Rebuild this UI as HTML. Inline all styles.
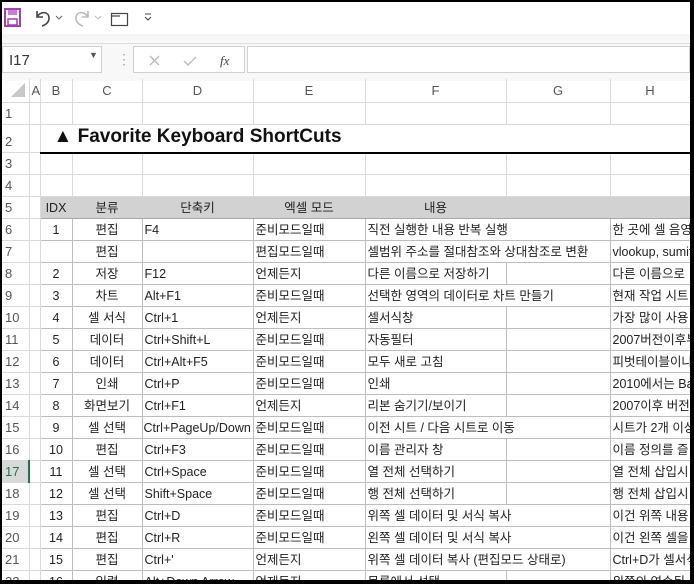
<!DOCTYPE html>
<html><head><meta charset="utf-8">
<style>
*{margin:0;padding:0;box-sizing:border-box}
body{width:694px;height:584px;overflow:hidden;background:#000;position:relative;font-family:"Liberation Sans","Noto Sans CJK KR",sans-serif;}
#win{position:absolute;left:2px;top:2px;width:688px;height:578px;background:#fff;overflow:hidden}
#tb{position:absolute;left:0;top:0;width:688px;height:32px;background:#fff}
#sep{position:absolute;left:0;top:32px;width:688px;height:10px;background:linear-gradient(#f4f4f4,#fafafa)}
#fb{position:absolute;left:0;top:41px;width:688px;height:38px;background:#f8f8f8;border-top:1px solid #ddd}
.box{position:absolute;background:#fff;border:1px solid #d0d0d0}
table{position:absolute;left:0;top:77px;border-collapse:collapse;table-layout:fixed;width:688px;font-size:12.5px;color:#222}
td{height:22px;border:1px solid #dadada;white-space:nowrap;overflow:hidden;padding:0 2px;line-height:20px}
td.rh{color:#555;font-size:13px;text-align:left;padding-left:3px;border-left:none}
tr.ch td{color:#555;font-size:13px;text-align:center;height:22px;line-height:18px;border-top:none}
td.c{text-align:center}
.t td.d{border-color:#bdbdbd}
.hd td.d{background:#d2d2d2;border-color:#d2d2d2;border-bottom-color:#a8a8a8;border-top-color:#a8a8a8;text-align:center}
td.bl{border-left:1px solid #888 !important}
</style></head><body>
<div id="win">
<div id="tb">
<svg width="200" height="32" style="position:absolute;left:0;top:0">
<rect x="3" y="7" width="15" height="17" fill="none" stroke="#a33fb0" stroke-width="2"/>
<rect x="6" y="8" width="9" height="5" fill="#c77ed0"/>
<rect x="6" y="17" width="9" height="6" fill="#fff" stroke="#a33fb0" stroke-width="1.5"/>
<path d="M35 9 L35 15 L41 15 M35 15 C38 9 47 9 47 16 C47 21 43 23 40 24" fill="none" stroke="#444" stroke-width="1.6"/>
<path d="M54 14 l3 3 l3 -3" fill="none" stroke="#666" stroke-width="1"/>
<path d="M86 9 L86 15 L80 15 M86 15 C83 9 74 9 74 16 C74 21 78 23 81 24" fill="none" stroke="#bbb" stroke-width="1.6"/>
<path d="M93 14 l3 3 l3 -3" fill="none" stroke="#bbb" stroke-width="1"/>
<rect x="109.5" y="11.5" width="16" height="12" fill="none" stroke="#444" stroke-width="1.2"/>
<line x1="110" y1="14" x2="118" y2="14" stroke="#444" stroke-width="1.2"/>
<path d="M143 12 h6 M143 15 l3 3 l3 -3" fill="none" stroke="#444" stroke-width="1.1"/>
</svg>
</div>
<div id="sep"></div>
<div id="fb">
<div class="box" style="left:0;top:2px;width:100px;height:27px;font-size:15px;color:#333;padding:5px 0 0 6px">I17<span style="position:absolute;left:86px;top:3px;font-size:9px;color:#555">▼</span></div>
<div style="position:absolute;left:115px;top:7px;color:#aaa;font-size:14px">⋮</div>
<div class="box" style="left:131px;top:2px;width:112px;height:27px">
<svg width="112" height="27"><path d="M16 9 l9 9 M25 9 l-9 9" stroke="#bbb" stroke-width="1.4"/><path d="M50 14 l4 4 l8 -8" fill="none" stroke="#bbb" stroke-width="1.4"/>
<text x="86" y="18" font-family="Liberation Serif" font-style="italic" font-size="13" fill="#444">fx</text></svg></div>
<div class="box" style="left:245px;top:2px;width:443px;height:27px"></div>
</div>
<table>
<colgroup><col style="width:27px"><col style="width:11px"><col style="width:32px"><col style="width:70px"><col style="width:111px"><col style="width:112px"><col style="width:141px"><col style="width:104px"><col style="width:80px"></colgroup>
<tr class="ch"><td style="border-left:none"><svg width="20" height="18"><path d="M20 4 L20 18 L6 18Z" fill="#c8c8c8"/></svg></td><td>A</td><td>B</td><td>C</td><td>D</td><td>E</td><td>F</td><td>G</td><td>H</td></tr>
<tr><td class="rh">1</td><td></td><td></td><td></td><td></td><td></td><td></td><td></td><td></td></tr>
<tr><td class="rh" style="height:28px;padding-top:6px">2</td><td></td><td colspan="7" style="border-bottom:2px solid #000;font-weight:bold;font-size:19px;color:#111;padding-left:13px;padding-bottom:3px;line-height:22px">▲ Favorite Keyboard ShortCuts</td></tr>
<tr><td class="rh">3</td><td></td><td></td><td></td><td></td><td></td><td></td><td></td><td></td></tr>
<tr><td class="rh">4</td><td></td><td></td><td></td><td></td><td></td><td></td><td></td><td></td></tr>
<tr class="hd"><td class="rh">5</td><td></td><td class="d bl">IDX</td><td class="d">분류</td><td class="d">단축키</td><td class="d">엑셀 모드</td><td class="d">내용</td><td class="d"></td><td class="d"></td></tr>
<tbody class="t">
<tr><td class="rh">6</td><td></td><td class="d c bl">1</td><td class="d c">편집</td><td class="d">F4</td><td class="d">준비모드일때</td><td class="d" colspan="2">직전 실행한 내용 반복 실행</td><td class="d">한 곳에 셀 음영</td></tr>
<tr><td class="rh">7</td><td></td><td class="d c bl"></td><td class="d c">편집</td><td class="d"></td><td class="d">편집모드일때</td><td class="d" colspan="2">셀범위 주소를 절대참조와 상대참조로 변환</td><td class="d">vlookup, sumif</td></tr>
<tr><td class="rh">8</td><td></td><td class="d c bl">2</td><td class="d c">저장</td><td class="d">F12</td><td class="d">언제든지</td><td class="d">다른 이름으로 저장하기</td><td class="d"></td><td class="d">다른 이름으로</td></tr>
<tr><td class="rh">9</td><td></td><td class="d c bl">3</td><td class="d c">차트</td><td class="d">Alt+F1</td><td class="d">준비모드일때</td><td class="d" colspan="2">선택한 영역의 데이터로 차트 만들기</td><td class="d">현재 작업 시트</td></tr>
<tr><td class="rh">10</td><td></td><td class="d c bl">4</td><td class="d c">셀 서식</td><td class="d">Ctrl+1</td><td class="d">언제든지</td><td class="d">셀서식창</td><td class="d"></td><td class="d">가장 많이 사용</td></tr>
<tr><td class="rh">11</td><td></td><td class="d c bl">5</td><td class="d c">데이터</td><td class="d">Ctrl+Shift+L</td><td class="d">준비모드일때</td><td class="d">자동필터</td><td class="d"></td><td class="d">2007버전이후부</td></tr>
<tr><td class="rh">12</td><td></td><td class="d c bl">6</td><td class="d c">데이터</td><td class="d">Ctrl+Alt+F5</td><td class="d">준비모드일때</td><td class="d">모두 새로 고침</td><td class="d"></td><td class="d">피벗테이블이나</td></tr>
<tr><td class="rh">13</td><td></td><td class="d c bl">7</td><td class="d c">인쇄</td><td class="d">Ctrl+P</td><td class="d">준비모드일때</td><td class="d">인쇄</td><td class="d"></td><td class="d">2010에서는 Ba</td></tr>
<tr><td class="rh">14</td><td></td><td class="d c bl">8</td><td class="d c">화면보기</td><td class="d">Ctrl+F1</td><td class="d">언제든지</td><td class="d">리본 숨기기/보이기</td><td class="d"></td><td class="d">2007이후 버전</td></tr>
<tr><td class="rh">15</td><td></td><td class="d c bl">9</td><td class="d c">셀 선택</td><td class="d" style="padding:0 1px">Ctrl+PageUp/Down</td><td class="d">준비모드일때</td><td class="d" colspan="2">이전 시트 / 다음 시트로 이동</td><td class="d">시트가 2개 이상</td></tr>
<tr><td class="rh">16</td><td></td><td class="d c bl">10</td><td class="d c">편집</td><td class="d">Ctrl+F3</td><td class="d">준비모드일때</td><td class="d">이름 관리자 창</td><td class="d"></td><td class="d">이름 정의를 즐</td></tr>
<tr><td class="rh" style="background:#d9d9d9;color:#217346;border-right:2px solid #217346">17</td><td></td><td class="d c bl">11</td><td class="d c">셀 선택</td><td class="d">Ctrl+Space</td><td class="d">준비모드일때</td><td class="d">열 전체 선택하기</td><td class="d"></td><td class="d">열 전체 삽입시</td></tr>
<tr><td class="rh">18</td><td></td><td class="d c bl">12</td><td class="d c">셀 선택</td><td class="d">Shift+Space</td><td class="d">준비모드일때</td><td class="d">행 전체 선택하기</td><td class="d"></td><td class="d">행 전체 삽입시</td></tr>
<tr><td class="rh">19</td><td></td><td class="d c bl">13</td><td class="d c">편집</td><td class="d">Ctrl+D</td><td class="d">준비모드일때</td><td class="d" colspan="2">위쪽 셀 데이터 및 서식 복사</td><td class="d">이건 위쪽 내용</td></tr>
<tr><td class="rh">20</td><td></td><td class="d c bl">14</td><td class="d c">편집</td><td class="d">Ctrl+R</td><td class="d">준비모드일때</td><td class="d" colspan="2">왼쪽 셀 데이터 및 서식 복사</td><td class="d">이건 왼쪽 셀을</td></tr>
<tr><td class="rh">21</td><td></td><td class="d c bl">15</td><td class="d c">편집</td><td class="d">Ctrl+'</td><td class="d">언제든지</td><td class="d" colspan="2">위쪽 셀 데이터 복사 (편집모드 상태로)</td><td class="d">Ctrl+D가 셀서식</td></tr>
<tr><td class="rh">22</td><td></td><td class="d c bl">16</td><td class="d c">입력</td><td class="d">Alt+Down Arrow</td><td class="d">언제든지</td><td class="d">목록에서 선택</td><td class="d"></td><td class="d">위쪽의 연속된</td></tr>
</tbody>
</table>
</div>
</body></html>
